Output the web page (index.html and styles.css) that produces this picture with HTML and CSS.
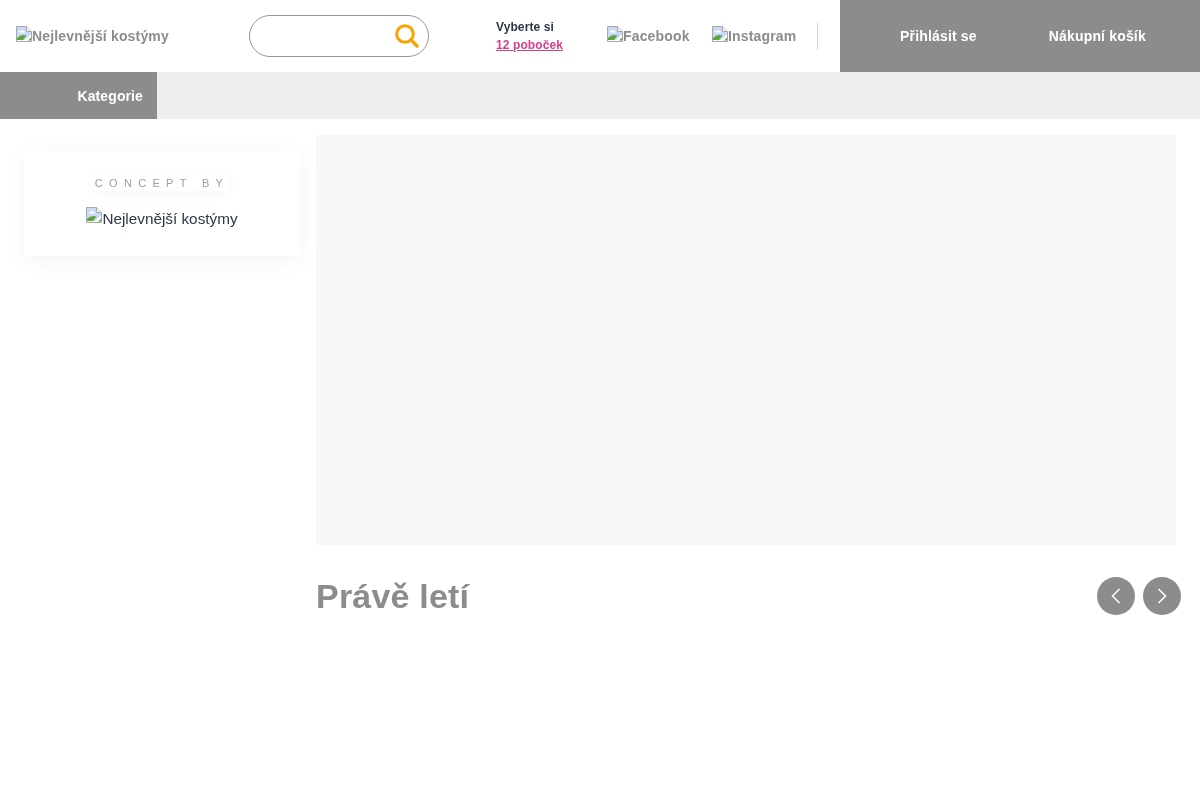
FILE: index.html
```html
<!DOCTYPE html>
<html lang="cs">
<head>
<meta charset="utf-8">
<title>Nejlevnější kostýmy</title>
<link rel="stylesheet" href="styles.css">
</head>
<body>
<svg class="defs" width="0" height="0" aria-hidden="true">
  <symbol id="broken" viewBox="0 0 16 16">
    <path d="M0.500 0.500H10.500L15.500 5.500V15.500H0.500Z" fill="#fff" stroke="#a8a8a8"/>
    <path d="M1 1H10V6H15V8L9 14H1Z" fill="#c9d9f7"/>
    <path d="M2.500 6.500Q3 4 5.500 4.500Q8 3.500 9 6.500Z" fill="#fff"/>
    <path d="M1 14V12Q5 7.500 10.500 9.500L7 14Z" fill="#5ba83a"/>
    <path d="M10 15L15 10V15Z" fill="#fff"/>
    <path d="M12 14.500L15 11.500V14.500Z" fill="#5ba83a"/>
    <path d="M10.500 0.500V5.500H15.500" fill="#f2f2f2" stroke="#a8a8a8"/>
  </symbol>
</svg>
<header class="topbar">
  <a class="logo alt" href="#"><svg class="bi"><use href="#broken"/></svg>Nejlevnější kostýmy</a>
  <form class="search">
    <svg class="search-icon" viewBox="0 0 24 24" width="24" height="24"><circle cx="10" cy="10" r="8.300" fill="none" stroke="#f9a400" stroke-width="3"/><path d="M16 16L22 22" stroke="#f9a400" stroke-width="3.400" stroke-linecap="round"/></svg>
  </form>
  <div class="branches">
    <div class="branches-label">Vyberte si</div>
    <a class="branches-link" href="#">12 poboček</a>
  </div>
  <a class="social alt social-fb" href="#"><svg class="bi"><use href="#broken"/></svg>Facebook</a>
  <a class="social alt social-ig" href="#"><svg class="bi"><use href="#broken"/></svg>Instagram</a>
  <div class="divider"></div>
  <div class="account">
    <a class="account-login" href="#">Přihlásit se</a>
    <a class="account-cart" href="#">Nákupní košík</a>
  </div>
</header>
<nav class="navbar">
  <a class="category" href="#">Kategorie</a>
</nav>
<div class="page">
  <aside class="sidebar">
    <div class="concept">
      <div class="concept-label">CONCEPT BY</div>
      <div class="concept-logo"><svg class="bi"><use href="#broken"/></svg>Nejlevnější kostýmy</div>
    </div>
  </aside>
  <main class="content">
    <div class="hero"></div>
    <div class="section-head">
      <h2 class="section-title">Právě letí</h2>
      <div class="arrows">
        <button class="arrow" type="button"><svg viewBox="0 0 12 16" width="12" height="16"><path d="M9.500 1L2.500 8L9.500 15" fill="none" stroke="#fff" stroke-width="1.500"/></svg></button>
        <button class="arrow" type="button"><svg viewBox="0 0 12 16" width="12" height="16"><path d="M2.500 1L9.500 8L2.500 15" fill="none" stroke="#fff" stroke-width="1.500"/></svg></button>
      </div>
    </div>
  </main>
</div>
</body>
</html>
```
FILE: styles.css
```css
* { box-sizing: border-box; }
html, body { margin: 0; padding: 0; }
body {
  background: #fff;
  color: #2d3748;
  font-family: "Liberation Sans", Arial, sans-serif;
  font-size: 16px;
  height: 800px;
  overflow: hidden;
  will-change: transform;
}
a { text-decoration: none; color: inherit; }
.defs { position: absolute; }
.bi { width: 16px; height: 16px; flex: none; display: block; }

.topbar { display: flex; align-items: center; height: 72px; }
.alt {
  display: flex;
  align-items: center;
  color: #8c8c8c;
  font-size: 14px;
  font-weight: 700;
  letter-spacing: 0.16px;
}
.alt .bi { margin-bottom: 4px; }
.logo { margin-left: 16px; width: 233px; }
.search {
  width: 180px;
  height: 42px;
  border: 1px solid #969696;
  border-radius: 21px;
  display: flex;
  align-items: center;
  justify-content: flex-end;
  padding-right: 9px;
}
.search-icon { display: block; }
.branches { margin-left: 67px; width: 111px; font-size: 12px; font-weight: 700; line-height: 18px; letter-spacing: 0.1px; }
.branches-label { color: #2d3748; }
.branches-link { color: #d53f8c; text-decoration: underline; }
.social-fb { width: 105px; }
.social-ig { width: 105px; }
.divider { width: 1px; height: 27px; background: #cbd5e0; }
.account {
  margin-left: auto;
  width: 360px;
  height: 72px;
  background: #8c8c8c;
  color: #fff;
  display: flex;
  align-items: center;
  font-size: 14px;
  font-weight: 700;
  letter-spacing: 0.17px;
}
.account-login { margin-left: 60px; }
.account-cart { margin-left: 72px; }

.navbar { height: 47px; background: #eee; display: flex; }
.category {
  width: 157px;
  background: #8c8c8c;
  color: #fff;
  font-size: 14px;
  font-weight: 700;
  letter-spacing: 0.1px;
  display: flex;
  align-items: center;
  justify-content: flex-end;
  padding-right: 14px;
}

.page { display: flex; padding: 16px 24px 0; }
.sidebar { width: 292px; flex: none; padding-top: 16px; }
.concept {
  width: 276px;
  height: 105px;
  background: #fff;
  box-shadow: 0 4px 20px rgba(0, 0, 0, 0.05);
  display: flex;
  flex-direction: column;
  align-items: center;
  padding-top: 24px;
}
.concept-label {
  font-size: 11px;
  line-height: 16px;
  height: 16px;
  letter-spacing: 6.300px;
  color: #94a0b3;
  background: #fff;
  box-shadow: 0 2px 14px rgba(0, 0, 0, 0.04);
}
.concept-logo {
  display: flex;
  align-items: center;
  margin-top: 16px;
  font-size: 15.300px;
  line-height: 24px;
  color: #2d3748;
}
.concept-logo .bi { margin-top: -8px; }

.content { width: 860px; flex: none; }
.hero { height: 410px; background: #f8f8f8; }
.section-head { display: flex; align-items: center; justify-content: space-between; height: 38px; margin-top: 32px; }
.section-title { margin: 0; font-size: 34px; line-height: 38px; font-weight: 700; letter-spacing: 0.2px; color: #8c8c8c; }
.arrows { display: flex; gap: 8px; margin-right: -5px; }
.arrow {
  width: 38px;
  height: 38px;
  padding: 0;
  border: none;
  border-radius: 50%;
  background: #8c8c8c;
  display: flex;
  align-items: center;
  justify-content: center;
}
.arrow svg { display: block; }
```
